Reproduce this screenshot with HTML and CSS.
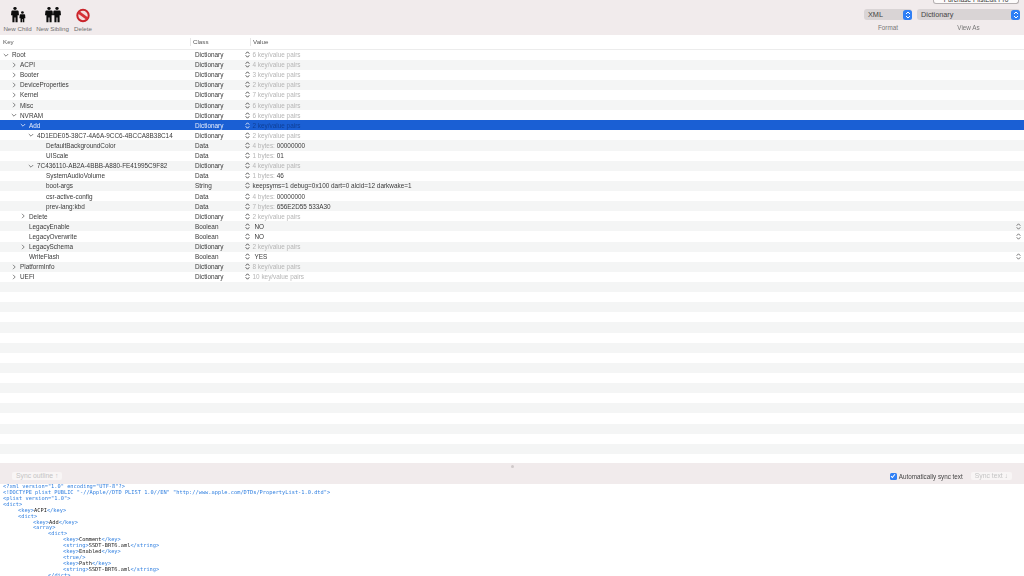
FILE: index.html
```html
<!DOCTYPE html>
<html lang="en">
<head>
<meta charset="utf-8">
<title>PlistEdit Pro</title>
<link rel="stylesheet" href="styles.css">
</head>
<body>
<div class="app">
  <header class="toolbar">
    <div class="tools">
      <div class="tool tool-child">
        <svg class="tool-icon" width="20" height="17" viewBox="0 0 20 20" preserveAspectRatio="none"><g fill="#0c0c0c"><circle cx="7" cy="3" r="1.7"/><path d="M4.3 5.3h5.4c.5 0 .8.3.9.8l.4 4.9H9.6v8H7.5v-5.6h-1V19H4.4v-8H3l.4-4.9c.1-.5.4-.8.9-.8z"/><circle cx="14.4" cy="7.6" r="1.4"/><path d="M12.4 9.6h4c.4 0 .7.3.7.7l.3 4h-1.1V19h-1.6v-3.8h-.6V19h-1.6v-4.7h-1.1l.3-4c0-.4.3-.7.7-.7z"/></g></svg>
        <span>New Child</span>
      </div>
      <div class="tool tool-sibling">
        <svg class="tool-icon" width="20" height="17" viewBox="0 0 20 20" preserveAspectRatio="none"><g fill="#0c0c0c"><circle cx="6" cy="3" r="1.7"/><path d="M3.3 5.3h5.4c.5 0 .8.3.9.8l.4 4.9H8.6v8H6.5v-5.6h-1V19H3.4v-8H2l.4-4.9c.1-.5.4-.8.9-.8z"/><circle cx="14" cy="3" r="1.7"/><path d="M11.3 5.3h5.4c.5 0 .8.3.9.8l.4 4.9h-1.4v8h-2.1v-5.6h-1V19h-2.1v-8H10l.4-4.9c.1-.5.4-.8.9-.8z"/></g></svg>
        <span>New Sibling</span>
      </div>
      <div class="tool tool-delete">
        <svg class="tool-icon" width="20" height="17" viewBox="0 0 20 17"><circle cx="10" cy="9.5" r="5.7" fill="#f4dcdc" stroke="#c9242a" stroke-width="2"/><path d="M5.4 6.2l9.2 6.6" stroke="#d62f35" stroke-width="2.8"/></svg>
        <span>Delete</span>
      </div>
    </div>
    <div class="top-right">
      <div class="purchase">Purchase PlistEdit Pro</div>
      <div class="selectors">
        <div class="selector selector-format">
          <div class="popup"><span>XML</span><i class="popup-arrows"><svg width="6" height="8" viewBox="0 0 6 8"><path d="M1 3l2-2 2 2M1 5l2 2 2-2" fill="none" stroke="#fff" stroke-width="1"/></svg></i></div>
          <span class="selector-label">Format</span>
        </div>
        <div class="selector selector-view">
          <div class="popup"><span>Dictionary</span><i class="popup-arrows"><svg width="6" height="8" viewBox="0 0 6 8"><path d="M1 3l2-2 2 2M1 5l2 2 2-2" fill="none" stroke="#fff" stroke-width="1"/></svg></i></div>
          <span class="selector-label">View As</span>
        </div>
      </div>
    </div>
  </header>

  <div class="table-head">
    <div class="h-cell h-key">Key</div>
    <div class="h-cell h-class">Class</div>
    <div class="h-cell h-value">Value</div>
  </div>

  <div class="rows" id="rows"></div>

  <div class="syncbar">
    <div class="grip"></div>
    <div class="sync-controls">
      <div class="btn">Sync outline ↑</div>
      <div class="auto">
        <i class="check"><svg width="7" height="7" viewBox="0 0 7 7"><path d="M1.2 3.6l1.6 1.7 3-3.8" fill="none" stroke="#fff" stroke-width="1.2"/></svg></i>
        <span>Automatically sync text</span>
        <div class="btn">Sync text ↓</div>
      </div>
    </div>
  </div>

  <pre class="xml"><b>&lt;?xml version="1.0" encoding="UTF-8"?&gt;</b>
<b>&lt;!DOCTYPE plist PUBLIC "-//Apple//DTD PLIST 1.0//EN" "http://www.apple.com/DTDs/PropertyList-1.0.dtd"&gt;</b>
<b>&lt;plist version="1.0"&gt;</b>
<b>&lt;dict&gt;</b>
<span class="t1"><b>&lt;key&gt;</b>ACPI<b>&lt;/key&gt;</b></span>
<span class="t1"><b>&lt;dict&gt;</b></span>
<span class="t2"><b>&lt;key&gt;</b>Add<b>&lt;/key&gt;</b></span>
<span class="t2"><b>&lt;array&gt;</b></span>
<span class="t3"><b>&lt;dict&gt;</b></span>
<span class="t4"><b>&lt;key&gt;</b>Comment<b>&lt;/key&gt;</b></span>
<span class="t4"><b>&lt;string&gt;</b>SSDT-BRT6.aml<b>&lt;/string&gt;</b></span>
<span class="t4"><b>&lt;key&gt;</b>Enabled<b>&lt;/key&gt;</b></span>
<span class="t4"><b>&lt;true/&gt;</b></span>
<span class="t4"><b>&lt;key&gt;</b>Path<b>&lt;/key&gt;</b></span>
<span class="t4"><b>&lt;string&gt;</b>SSDT-BRT6.aml<b>&lt;/string&gt;</b></span>
<span class="t3"><b>&lt;/dict&gt;</b></span></pre>
</div>
<script src="rows.js"></script>
</body>
</html>
```
FILE: rows.js
```js
var data = [
  [0,'o','Root','Dictionary','6 key/value pairs','m'],
  [1,'c','ACPI','Dictionary','4 key/value pairs','m'],
  [1,'c','Booter','Dictionary','3 key/value pairs','m'],
  [1,'c','DeviceProperties','Dictionary','2 key/value pairs','m'],
  [1,'c','Kernel','Dictionary','7 key/value pairs','m'],
  [1,'c','Misc','Dictionary','6 key/value pairs','m'],
  [1,'o','NVRAM','Dictionary','6 key/value pairs','m'],
  [2,'o','Add','Dictionary','2 key/value pairs','s'],
  [3,'o','4D1EDE05-38C7-4A6A-9CC6-4BCCA8B38C14','Dictionary','2 key/value pairs','m'],
  [4,'','DefaultBackgroundColor','Data','4 bytes:| 00000000','b'],
  [4,'','UIScale','Data','1 bytes:| 01','b'],
  [3,'o','7C436110-AB2A-4BBB-A880-FE41995C9F82','Dictionary','4 key/value pairs','m'],
  [4,'','SystemAudioVolume','Data','1 bytes:| 46','b'],
  [4,'','boot-args','String','keepsyms=1 debug=0x100 dart=0 alcid=12 darkwake=1','v'],
  [4,'','csr-active-config','Data','4 bytes:| 00000000','b'],
  [4,'','prev-lang:kbd','Data','7 bytes:| 656E2D55 533A30','b'],
  [2,'c','Delete','Dictionary','2 key/value pairs','m'],
  [2,'','LegacyEnable','Boolean','NO','p'],
  [2,'','LegacyOverwrite','Boolean','NO','p'],
  [2,'c','LegacySchema','Dictionary','2 key/value pairs','m'],
  [2,'','WriteFlash','Boolean','YES','p'],
  [1,'c','PlatformInfo','Dictionary','8 key/value pairs','m'],
  [1,'c','UEFI','Dictionary','10 key/value pairs','m']
];
var rows = document.getElementById('rows');
var chev = {
  o: '<svg width="6" height="6" viewBox="0 0 6 6"><path d="M.8 2l2.2 2.2L5.2 2" fill="none" stroke="currentColor" stroke-width=".8"/></svg>',
  c: '<svg width="6" height="6" viewBox="0 0 6 6"><path d="M2 .8l2.2 2.2L2 5.2" fill="none" stroke="currentColor" stroke-width=".8"/></svg>'
};
var step = '<svg width="5" height="7" viewBox="0 0 5 7"><path d="M.7 2.7l1.8-1.9 1.8 1.9M.7 4.3l1.8 1.9 1.8-1.9" fill="none" stroke="currentColor" stroke-width="1"/></svg>';
function el(cls, html) {
  var d = document.createElement('div');
  d.className = cls;
  d.innerHTML = html || '';
  return d;
}
for (var i = 0; i < 41; i++) {
  var r = data[i];
  var row = el('row' + (i % 2 ? ' alt' : ''));
  if (r) {
    if (r[5] === 's') row.className += ' selected';
    var key = el('c-key lvl' + r[0], '<i class="dis">' + (chev[r[1]] || '') + '</i><span>' + r[2] + '</span>');
    var cls = el('c-class', r[3]);
    var st = el('c-step', step);
    var val;
    if (r[5] === 'b') {
      var p = r[4].split('|');
      val = '<span class="muted">' + p[0] + '</span><span class="val">' + p[1] + '</span>';
    } else if (r[5] === 'v') {
      val = '<span class="val">' + r[4] + '</span>';
    } else if (r[5] === 'p') {
      val = '<span class="val pop">' + r[4] + '</span>';
    } else {
      val = '<span class="muted">' + r[4] + '</span>';
    }
    var v = el('c-value', val);
    row.appendChild(key); row.appendChild(cls); row.appendChild(st); row.appendChild(v);
    if (r[5] === 'p') row.appendChild(el('c-end', step));
  }
  rows.appendChild(row);
}
```
FILE: styles.css
```css
* { box-sizing: border-box; }
html, body { margin: 0; padding: 0; width: 1024px; height: 576px; overflow: hidden; background: #fff; }
body { font-family: "Liberation Sans", Arial, sans-serif; color: #333; }
.app { width: 1024px; height: 576px; display: flex; flex-direction: column; overflow: hidden; filter: blur(.35px); }

.toolbar { height: 35px; flex: none; background: #f1ebec; display: flex; justify-content: space-between; }
.tools { display: flex; align-items: flex-start; padding: 6px 0 0 3px; }
.tool { display: flex; flex-direction: column; align-items: center; font-size: 6.2px; color: #6e6e6e; gap: 2px; }
.tool span { white-space: nowrap; line-height: 7px; }
.tool-icon { display: block; }
.tool-child { width: 29px; }
.tool-sibling { width: 35px; margin-left: 3px; }
.tool-delete { width: 20px; margin-left: 3px; }

.top-right { width: 164px; display: flex; flex-direction: column; align-items: flex-end; margin-right: 4px; }
.purchase { height: 4px; width: 86px; margin-right: 1px; background: #fdfbfb; border: 1px solid #b5b0b1; border-top: 0; border-radius: 0 0 3px 3px; font-size: 6.5px; line-height: 0; color: #333; text-align: center; white-space: nowrap; overflow: hidden; }
.selectors { display: flex; gap: 5px; margin-top: 5px; }
.selector { display: flex; flex-direction: column; align-items: center; gap: 4px; }
.selector-format { width: 48px; }
.selector-view { width: 103px; }
.popup { width: 100%; height: 11px; background: #d9d4d5; border-radius: 3px; display: flex; justify-content: space-between; align-items: center; padding-left: 4px; font-size: 7.3px; color: #444; }
.popup-arrows { width: 9px; height: 10px; background: #2f7ff5; border-radius: 2.5px; display: flex; align-items: center; justify-content: center; }
.selector-label { font-size: 6.3px; color: #777; line-height: 7px; }

.table-head { height: 14.5px; flex: none; display: flex; background: #fff; border-bottom: 1px solid #ececec; font-size: 6.2px; color: #555; align-items: center; }
.h-cell { padding-left: 3px; height: 8px; line-height: 8px; }
.h-key { width: 190px; }
.h-class { width: 60px; border-left: 1px solid #e6e6e6; padding-left: 2px; }
.h-value { flex: 1; border-left: 1px solid #e6e6e6; padding-left: 2px; }

.rows { flex: none; height: 413.5px; overflow: hidden; }
.row { height: 10.11px; display: flex; align-items: center; font-size: 6.4px; color: #3a3a3a; white-space: nowrap; background: #fff; }
.row.alt { background: #f4f5f5; }
.row.selected { background: #1a5fd4; color: #e8eefb; }
.c-key { width: 195px; flex: none; display: flex; align-items: center; }
.dis { width: 6px; height: 6px; display: block; margin-right: 3px; color: #666; }
.dis svg { display: block; }
.selected .dis { color: #e8eefb; }
.lvl0 { padding-left: 3px; }
.lvl1 { padding-left: 11px; }
.lvl2 { padding-left: 20px; }
.lvl3 { padding-left: 28px; }
.lvl4 { padding-left: 37px; }
.c-class { width: 50px; flex: none; }
.c-step { width: 7.5px; flex: none; display: flex; align-items: center; color: #555; }
.c-step svg, .c-end svg { display: block; }
.selected .c-step { color: #dfe8fa; }
.c-value { flex: 1; }
.muted { color: #b5b5b5; }
.selected .muted { color: #0f3f96; }
.val { color: #3a3a3a; }
.c-value .pop { margin-left: 2px; }
.c-end { width: 8px; flex: none; color: #777; }

.syncbar { height: 21px; flex: none; background: #f1ebec; display: flex; flex-direction: column; }
.grip { width: 3px; height: 3px; background: #cfc9ca; border-radius: 50%; margin: 2px auto 0; flex: none; }
.sync-controls { flex: 1; display: flex; justify-content: space-between; align-items: center; padding: 0 12px 0 12px; }
.btn { height: 8.5px; line-height: 8.5px; padding: 0 4px; background: #f8f5f5; border-radius: 2px; font-size: 6.8px; color: #c4c4c4; white-space: nowrap; }
.auto { display: flex; align-items: center; font-size: 6.3px; color: #444; }
.check { width: 7px; height: 7px; background: #2f7ff5; border-radius: 1.5px; display: flex; align-items: center; justify-content: center; margin-right: 2px; }
.check svg { width: 6px; height: 6px; }
.auto .btn { margin-left: 8px; }

.xml { flex: 1; margin: 0; padding: 0 0 0 3px; background: #fff; font-family: "DejaVu Sans Mono", monospace; font-size: 5.33px; line-height: 5.92px; color: #222; overflow: hidden; }
.xml b { font-weight: normal; color: #2f7fe0; }
.t1 { padding-left: 15px; }
.t2 { padding-left: 30px; }
.t3 { padding-left: 45px; }
.t4 { padding-left: 60px; }
```
